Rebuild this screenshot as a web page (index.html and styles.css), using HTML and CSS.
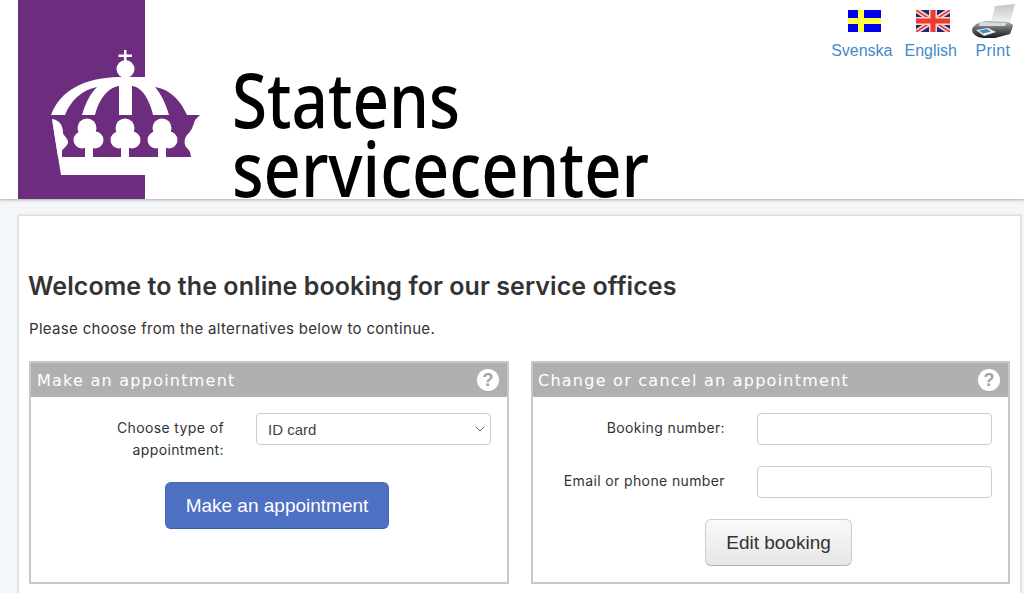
FILE: index.html
```html
<!DOCTYPE html>
<html lang="en">
<head>
    <meta charset="UTF-8">
    <meta name="viewport" content="width=device-width, initial-scale=1.0">
    <title>Online booking</title>
    <link rel="stylesheet" href="styles.css">
</head>
<body>
    <header class="site-header">
        <svg class="logo" width="650" height="199" viewBox="0 0 650 199">
            <rect x="0" y="0" width="127" height="199" fill="#6c2d7e"/>
            <g transform="translate(-18 0)">
                <!-- dome -->
                <path d="M51 115C60 90 85 78 118 77H146V115Z" fill="#fff"/>
                <circle cx="125.500" cy="69" r="9" fill="#fff"/>
                <path d="M124 50h2.500v4.500h5.500v2.500h-5.500v5h-2.500v-5h-5.500v-2.500h5.500z" fill="#fff"/>
                <path d="M65 115C71 100 82 90 97 87C90 94 85 104 82 115Z" fill="#6c2d7e"/>
                <path d="M95 115C98 102 106 88 119 86V115Z" fill="#6c2d7e"/>
                <path d="M132 86C143 87 150 102 153 115H132Z" fill="#6c2d7e"/>
                <path d="M155 87C172 90 181 102 187 115H169C166 104 161 94 155 87Z" fill="#6c2d7e"/>
                <!-- band -->
                <path d="M145 115H200L195 120C193 126 192 130 188 134C184 137 183 146 188 149L190 152L191 157H145Z" fill="#6c2d7e"/>
                <path d="M52 119L61 175H146V157H62Z" fill="#fff"/>
                <g fill="#fff">
                    <path d="M52 119C60 120 63 126 63 133C63 135 68 138 68 142C68 146 63 148 62 151L62 157H58Z"/>
                    <circle cx="87" cy="128" r="9.500"/><circle cx="82" cy="140" r="8.500"/><circle cx="95" cy="140" r="8.500"/>
                    <rect x="85" y="140" width="8" height="18"/>
                    <circle cx="125" cy="128" r="9.500"/><circle cx="119" cy="140" r="8.500"/><circle cx="132" cy="140" r="8.500"/>
                    <rect x="121" y="140" width="8" height="18"/>
                    <circle cx="162" cy="128" r="9.500"/><circle cx="156" cy="140" r="8.500"/><circle cx="169" cy="140" r="8.500"/>
                    <rect x="158" y="140" width="8" height="18"/>
                </g>
                <text class="logo-text" x="232" y="128" textLength="228" lengthAdjust="spacingAndGlyphs">Statens</text>
                <text class="logo-text" x="232" y="197" textLength="417" lengthAdjust="spacingAndGlyphs">servicecenter</text>
            </g>
        </svg>
        <nav class="tools">
            <a href="#" class="tool">
                <svg width="33" height="22" viewBox="0 0 33 22">
                    <rect width="33" height="22" fill="#0000f0"/>
                    <rect x="10" width="6" height="22" fill="#ffff40"/>
                    <rect y="8" width="33" height="6" fill="#ffff40"/>
                </svg>
                <span>Svenska</span>
            </a>
            <a href="#" class="tool">
                <svg width="34" height="22" viewBox="0 0 34 22">
                    <rect width="34" height="22" fill="#1a2a78"/>
                    <path d="M0 0L34 22M34 0L0 22" stroke="#f6d4d4" stroke-width="5"/>
                    <path d="M0 0L34 22M34 0L0 22" stroke="#e8352c" stroke-width="1.500"/>
                    <path d="M17 0V22M0 11H34" stroke="#f6d4d4" stroke-width="8"/>
                    <path d="M17 0V22M0 11H34" stroke="#f03a2a" stroke-width="5"/>
                </svg>
                <span>English</span>
            </a>
            <a href="#" class="tool tool-print">
                <svg width="44" height="36" viewBox="0 0 44 36">
                    <defs>
                        <linearGradient id="printer-paper" x1="0" y1="0" x2="0" y2="1">
                            <stop offset="0" stop-color="#c4c7c7"/>
                            <stop offset="1" stop-color="#f2f3f3"/>
                        </linearGradient>
                        <linearGradient id="printer-body" x1="0" y1="0" x2="0" y2="1">
                            <stop offset="0" stop-color="#b4b6b7"/>
                            <stop offset="0.500" stop-color="#5c5f62"/>
                            <stop offset="1" stop-color="#1a1b1d"/>
                        </linearGradient>
                    </defs>
                    <path d="M24 3L44 1L39 20L20 20Z" fill="url(#printer-paper)"/>
                    <path d="M1 26C3 21 10 18 17 18L36 19C40 20 42 21 42 23L39 31L24 35H12C5 34 1 31 1 26Z" fill="url(#printer-body)"/>
                    <path d="M9 19L36 20L34 23L8 23Z" fill="#d8dadb"/>
                    <path d="M5 27L17 25L25 29L13 33Z" fill="#e8eef2"/>
                    <path d="M8 27.500L16 26L20 28.500L12 30.500Z" fill="#3f8fc4"/>
                </svg>
                <span>Print</span>
            </a>
        </nav>
    </header>

    <main class="card">
        <h1>Welcome to the online booking for our service offices</h1>
        <p class="intro">Please choose from the alternatives below to continue.</p>
        <div class="panels">
            <section class="panel">
                <div class="panel-head">
                    <h2>Make an appointment</h2>
                    <span class="help">?</span>
                </div>
                <form class="panel-body">
                    <div class="row">
                        <label class="row-label" for="type">Choose type of<br>appointment:</label>
                        <div class="select-wrap">
                            <select id="type" class="field field-select">
                                <option>ID card</option>
                            </select>
                            <svg class="chevron" width="10" height="6" viewBox="0 0 10 6">
                                <path d="M1 1L5 5L9 1" fill="none" stroke="#666" stroke-width="1"/>
                            </svg>
                        </div>
                    </div>
                    <div class="actions">
                        <button type="button" class="btn btn-primary">Make an appointment</button>
                    </div>
                </form>
            </section>
            <section class="panel panel-change">
                <div class="panel-head">
                    <h2>Change or cancel an appointment</h2>
                    <span class="help">?</span>
                </div>
                <form class="panel-body">
                    <div class="row">
                        <label class="row-label" for="booking">Booking number:</label>
                        <input type="text" id="booking" class="field">
                    </div>
                    <div class="row">
                        <label class="row-label" for="contact">Email or phone number</label>
                        <input type="text" id="contact" class="field">
                    </div>
                    <div class="actions">
                        <button type="button" class="btn btn-default">Edit booking</button>
                    </div>
                </form>
            </section>
        </div>
    </main>
</body>
</html>
```

FILE: styles.css
```css
html {
    overflow: hidden;
}
body {
    margin: 0;
    background: #f3f7fa;
    color: #333;
    font-family: 'Inter', sans-serif;
}
.site-header {
    display: flex;
    justify-content: space-between;
    height: 199px;
    padding-left: 18px;
    background: #fff;
    box-shadow: 0 1px 3px rgba(0, 0, 0, 0.3);
}
.logo {
    display: block;
    overflow: visible;
}
.logo-text {
    font-family: 'Noto Sans', sans-serif;
    font-size: 76px;
    font-weight: 500;
    fill: #000;
}
.tools {
    display: flex;
    align-items: flex-end;
    align-self: flex-start;
    gap: 12px;
    padding: 3px 9px 0 0;
    font-family: 'Liberation Sans', Arial, sans-serif;
}
.tool {
    display: flex;
    flex-direction: column;
    align-items: center;
    color: #428bca;
    font-size: 16px;
    line-height: 20px;
    text-decoration: none;
}
.tool svg {
    display: block;
    margin: 0 0 9px 5px;
}
.tool-print {
    margin-left: 2px;
    letter-spacing: 0.400px;
}
.tool-print svg {
    margin: 0 0 2px;
}
.card {
    margin: 16px 3px 0 18px;
    padding: 56px 10px 40px;
    background: #fff;
    border: 1px solid #ddd;
    box-shadow: 0 0 2px rgba(0, 0, 0, 0.15);
}
h1 {
    margin: 0 0 0 -1px;
    font-size: 25px;
    font-weight: 600;
    line-height: 28px;
    letter-spacing: 0.070px;
    color: #333;
}
.intro {
    margin: 19px 0 0;
    font-size: 15px;
    line-height: 20px;
    letter-spacing: 0.320px;
}
.panels {
    display: grid;
    grid-template-columns: 480px 479px;
    gap: 22px;
    margin-top: 22px;
}
.panel {
    height: 219px;
    border: 2px solid #c8c8c4;
}
.panel-head {
    display: flex;
    justify-content: space-between;
    align-items: center;
    height: 34px;
    padding: 0 8px 0 6px;
    background: #b0b0b0;
}
.panel-change .panel-head {
    padding-left: 5px;
}
.panel-head h2 {
    margin: 0;
    font-family: 'DejaVu Sans', sans-serif;
    font-size: 16px;
    font-weight: 400;
    letter-spacing: 1.250px;
    color: #fff;
}
.help {
    width: 22px;
    height: 22px;
    border-radius: 50%;
    background: #fff;
    color: #a4a4a4;
    font-family: 'Liberation Sans', Arial, sans-serif;
    font-size: 18px;
    font-weight: 700;
    line-height: 22px;
    text-align: center;
}
.panel-body {
    padding-top: 16px;
}
.row {
    display: flex;
    align-items: flex-start;
    gap: 32px;
    margin-bottom: 21px;
}
.row-label {
    width: 193px;
    padding-top: 4px;
    font-size: 14px;
    line-height: 22px;
    letter-spacing: 0.380px;
    text-align: right;
}
.panel-change .row-label {
    width: 192px;
}
.field {
    box-sizing: border-box;
    width: 235px;
    height: 32px;
    padding: 0 11px;
    background: #fff;
    border: 1px solid #ccc;
    border-radius: 4px;
    color: #444;
    font-family: 'Liberation Sans', Arial, sans-serif;
    font-size: 15px;
}
.select-wrap {
    position: relative;
    width: 235px;
}
.field-select {
    appearance: none;
}
.chevron {
    position: absolute;
    top: 13px;
    right: 6px;
}
.actions {
    display: flex;
    justify-content: center;
    padding-left: 16px;
}
.btn {
    height: 47px;
    padding: 0 20px;
    border-radius: 6px;
    font-family: 'Liberation Sans', Arial, sans-serif;
    font-size: 19px;
}
.btn-primary {
    background: #4f71c4;
    border: 1px solid #466ab9;
    border-bottom-color: #3a5ba6;
    color: #fff;
}
.btn-default {
    background: linear-gradient(#fafafa, #e6e6e6);
    border: 1px solid #ccc;
    border-bottom-color: #b3b3b3;
    color: #333;
}
```
